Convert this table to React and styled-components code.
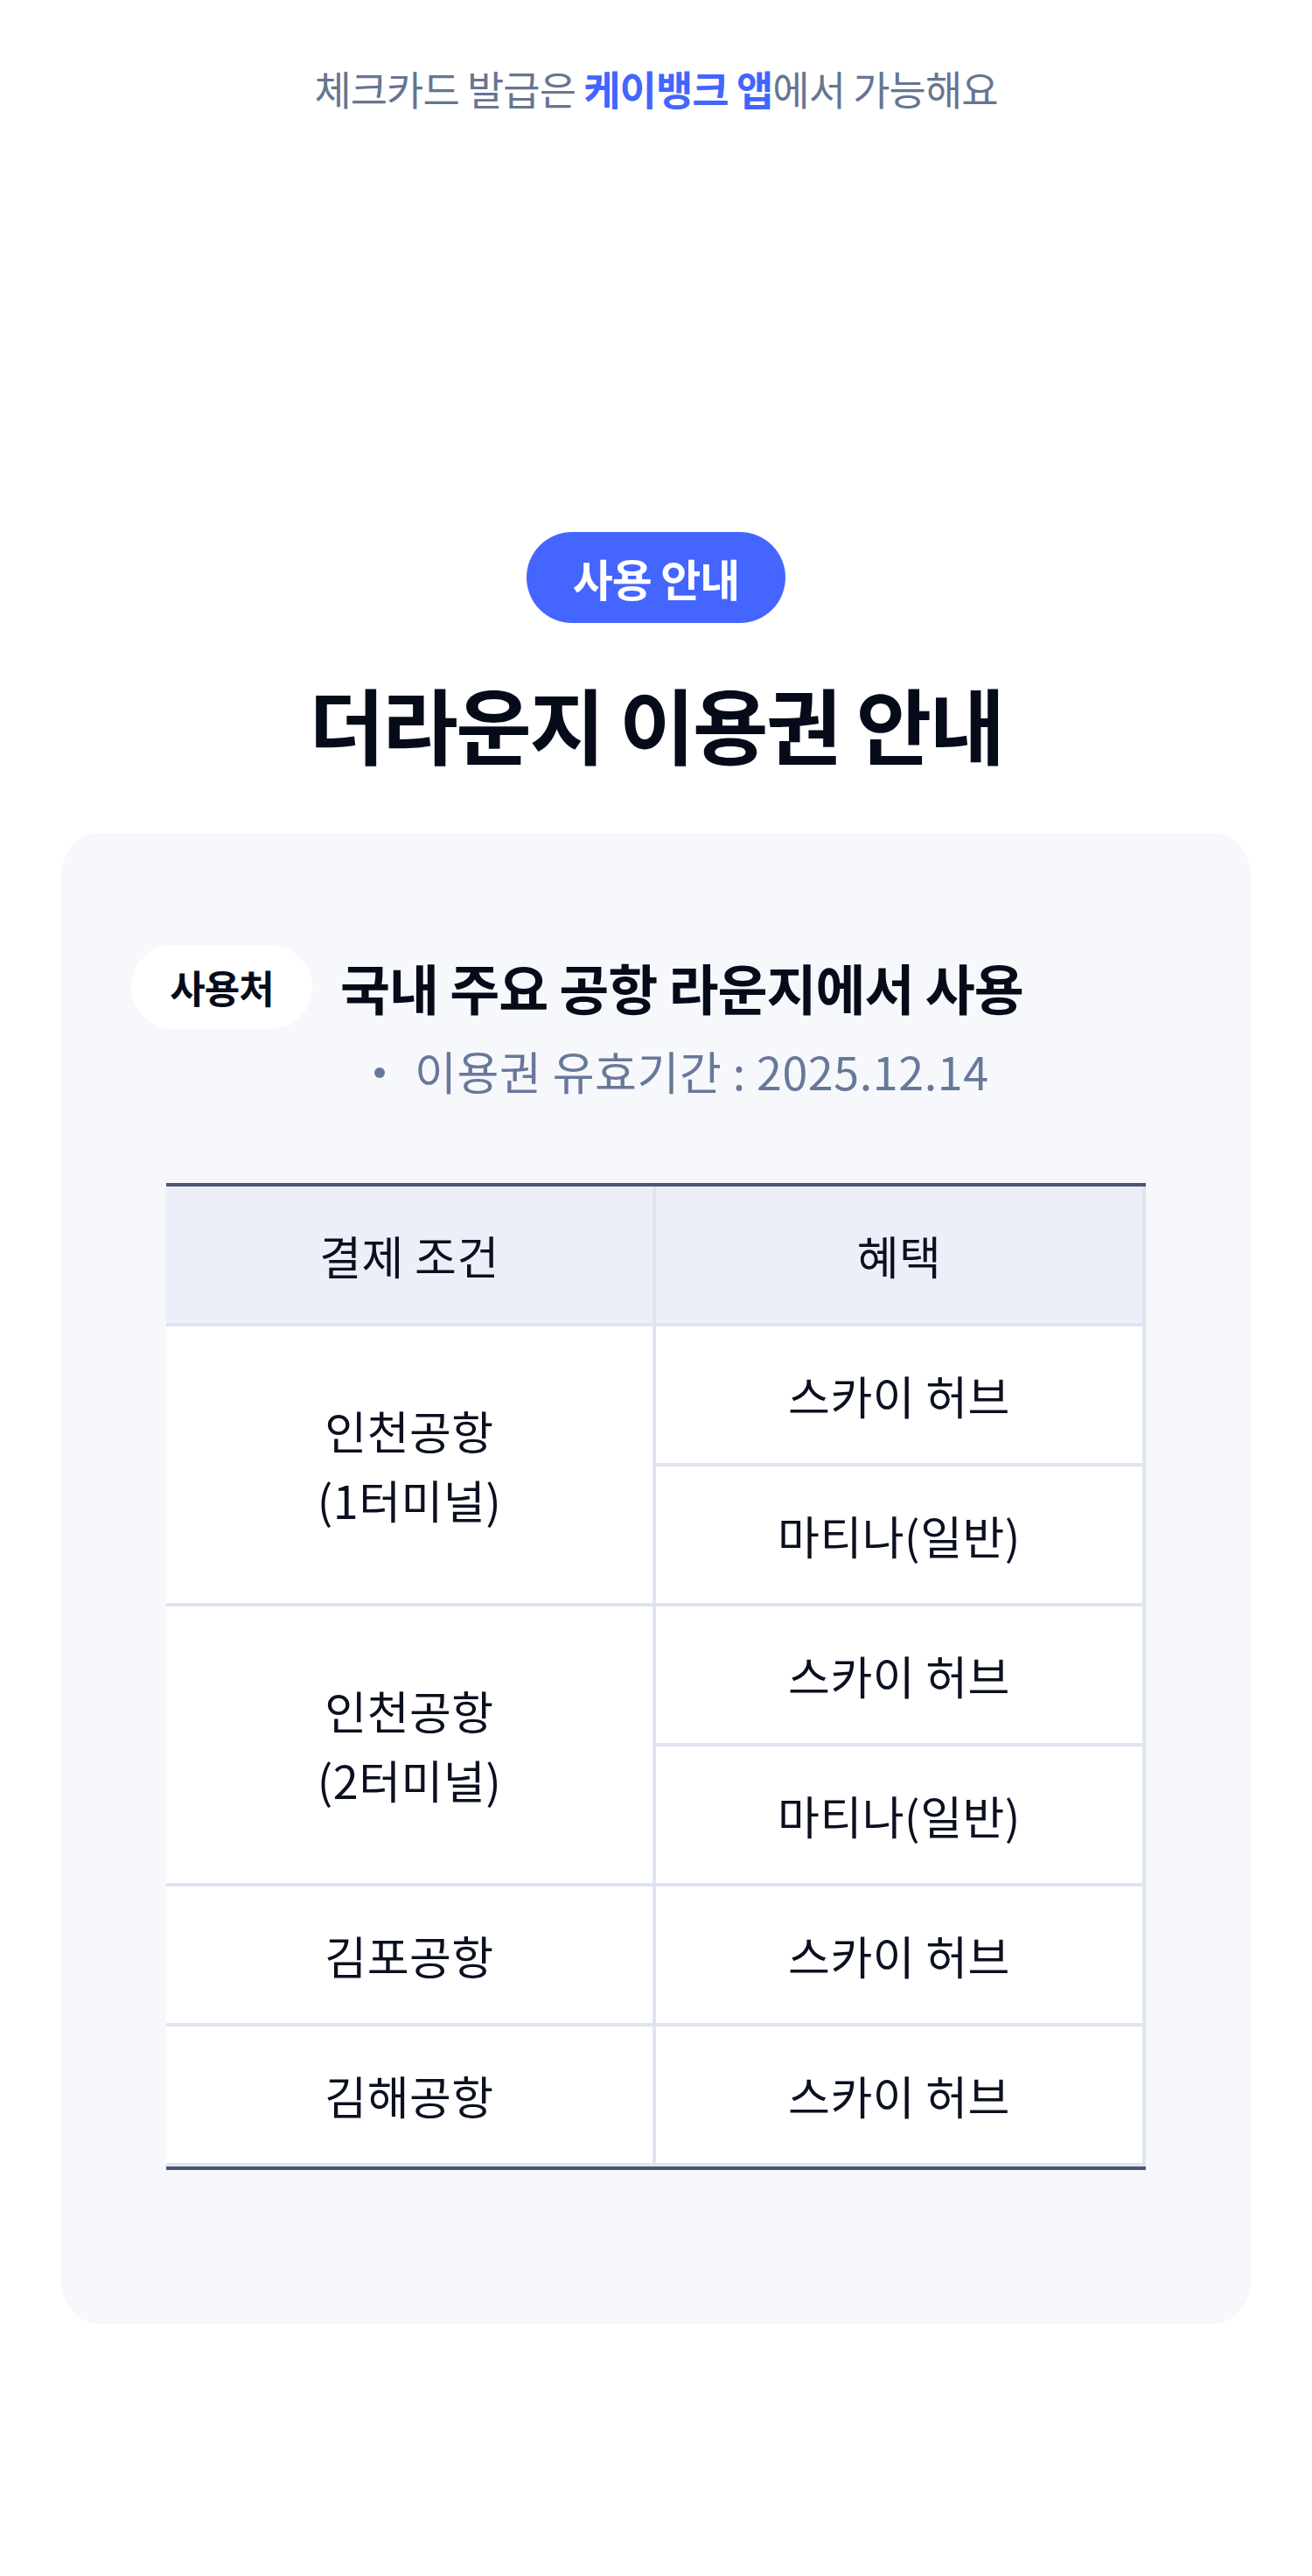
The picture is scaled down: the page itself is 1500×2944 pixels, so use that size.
import React from "react";
import styled, { createGlobalStyle } from "styled-components";

const rows = [
  { place: ["인천공항", "(1터미널)"], benefits: ["스카이 허브", "마티나(일반)"] },
  { place: ["인천공항", "(2터미널)"], benefits: ["스카이 허브", "마티나(일반)"] },
  { place: ["김포공항"], benefits: ["스카이 허브"] },
  { place: ["김해공항"], benefits: ["스카이 허브"] },
];

function App() {
  return (
    <Page>
      <GlobalStyle />
      <Notice>
        체크카드 발급은 <strong>케이뱅크 앱</strong>에서 가능해요
      </Notice>

      <Intro>
        <Badge>사용 안내</Badge>
        <Title>더라운지 이용권 안내</Title>
      </Intro>

      <Card>
        <InfoRow>
          <Pill>사용처</Pill>
          <InfoText>
            <InfoTitle>국내 주요 공항 라운지에서 사용</InfoTitle>
            <Bullet>이용권 유효기간 : 2025.12.14</Bullet>
          </InfoText>
        </InfoRow>

        <Table>
          <thead>
            <tr>
              <Th>결제 조건</Th>
              <Th>혜택</Th>
            </tr>
          </thead>
          <tbody>
            {rows.map((r, i) =>
              r.benefits.map((b, j) => (
                <tr key={`${i}-${j}`}>
                  {j === 0 && (
                    <Td rowSpan={r.benefits.length}>
                      {r.place.map((p) => (
                        <div key={p}>{p}</div>
                      ))}
                    </Td>
                  )}
                  <Td>{b}</Td>
                </tr>
              ))
            )}
          </tbody>
        </Table>
      </Card>
    </Page>
  );
}

export default App;

const GlobalStyle = createGlobalStyle`
  * { box-sizing: border-box; }
  body {
    margin: 0;
    background: #fff;
    font-family: "Noto Sans CJK KR", "Noto Sans", sans-serif;
  }
`;

const Page = styled.div`
  width: 1500px;
  min-height: 2944px;
  background: #fff;
  padding-bottom: 290px;
`;

const Notice = styled.p`
  margin: 0;
  padding-top: 70px;
  line-height: 60px;
  text-align: center;
  font-size: 46px;
  letter-spacing: -1px;
  color: #667591;

  strong {
    color: #4365ff;
    font-weight: 700;
  }
`;

const Intro = styled.div`
  display: flex;
  flex-direction: column;
  align-items: center;
  padding-top: 478px;
`;

const Badge = styled.span`
  display: inline-flex;
  align-items: center;
  justify-content: center;
  height: 104px;
  padding: 0 53px;
  border-radius: 52px;
  background: #4466ff;
  color: #fff;
  font-size: 50px;
  font-weight: 700;
  letter-spacing: -1px;
`;

const Title = styled.h1`
  margin: 54px 0 0;
  line-height: 120px;
  font-size: 94px;
  font-weight: 700;
  letter-spacing: -2.5px;
  color: #060b1a;
`;

const Card = styled.div`
  margin: 66px 70px 0;
  padding: 128px 120px 176px;
  background: #f7f8fc;
  border-radius: 46px;
`;

const InfoRow = styled.div`
  display: flex;
  align-items: flex-start;
  gap: 32px;
  margin-left: -40px;
`;

const Pill = styled.span`
  flex: none;
  display: inline-flex;
  align-items: center;
  justify-content: center;
  width: 207px;
  height: 96px;
  border-radius: 48px;
  background: #fff;
  color: #060b1a;
  font-size: 44px;
  font-weight: 700;
  letter-spacing: -1px;
`;

const InfoText = styled.div`
  display: flex;
  flex-direction: column;
  align-items: center;
`;

const InfoTitle = styled.div`
  line-height: 96px;
  font-size: 62px;
  font-weight: 700;
  letter-spacing: -1px;
  color: #060b1a;
`;

const Bullet = styled.div`
  position: relative;
  margin-top: 16px;
  padding-left: 46px;
  line-height: 64px;
  font-size: 52px;
  letter-spacing: 0.6px;
  color: #68789a;

  &::before {
    content: "";
    position: absolute;
    left: 0;
    top: 28px;
    width: 12px;
    height: 12px;
    border-radius: 50%;
    background: #68789a;
  }
`;

const Table = styled.table`
  width: 100%;
  margin-top: 96px;
  border-collapse: separate;
  border-spacing: 0;
  table-layout: fixed;
  border-top: 4px solid #4b5670;
  border-bottom: 4px solid #4b5670;
`;

const Th = styled.th`
  height: 160px;
  padding: 0;
  background: #eceff8;
  border-right: 4px solid #dfe5f0;
  border-bottom: 4px solid #dfe5f0;
  font-size: 52px;
  font-weight: 400;
  letter-spacing: 0.5px;
  color: #0b1020;
  text-align: center;
`;

const Td = styled.td`
  height: 160px;
  padding: 0;
  background: #fff;
  border-right: 4px solid #dfe5f0;
  border-bottom: 4px solid #dfe5f0;
  font-size: 52px;
  line-height: 79px;
  letter-spacing: 0.5px;
  color: #0b1020;
  text-align: center;
  vertical-align: middle;
`;
